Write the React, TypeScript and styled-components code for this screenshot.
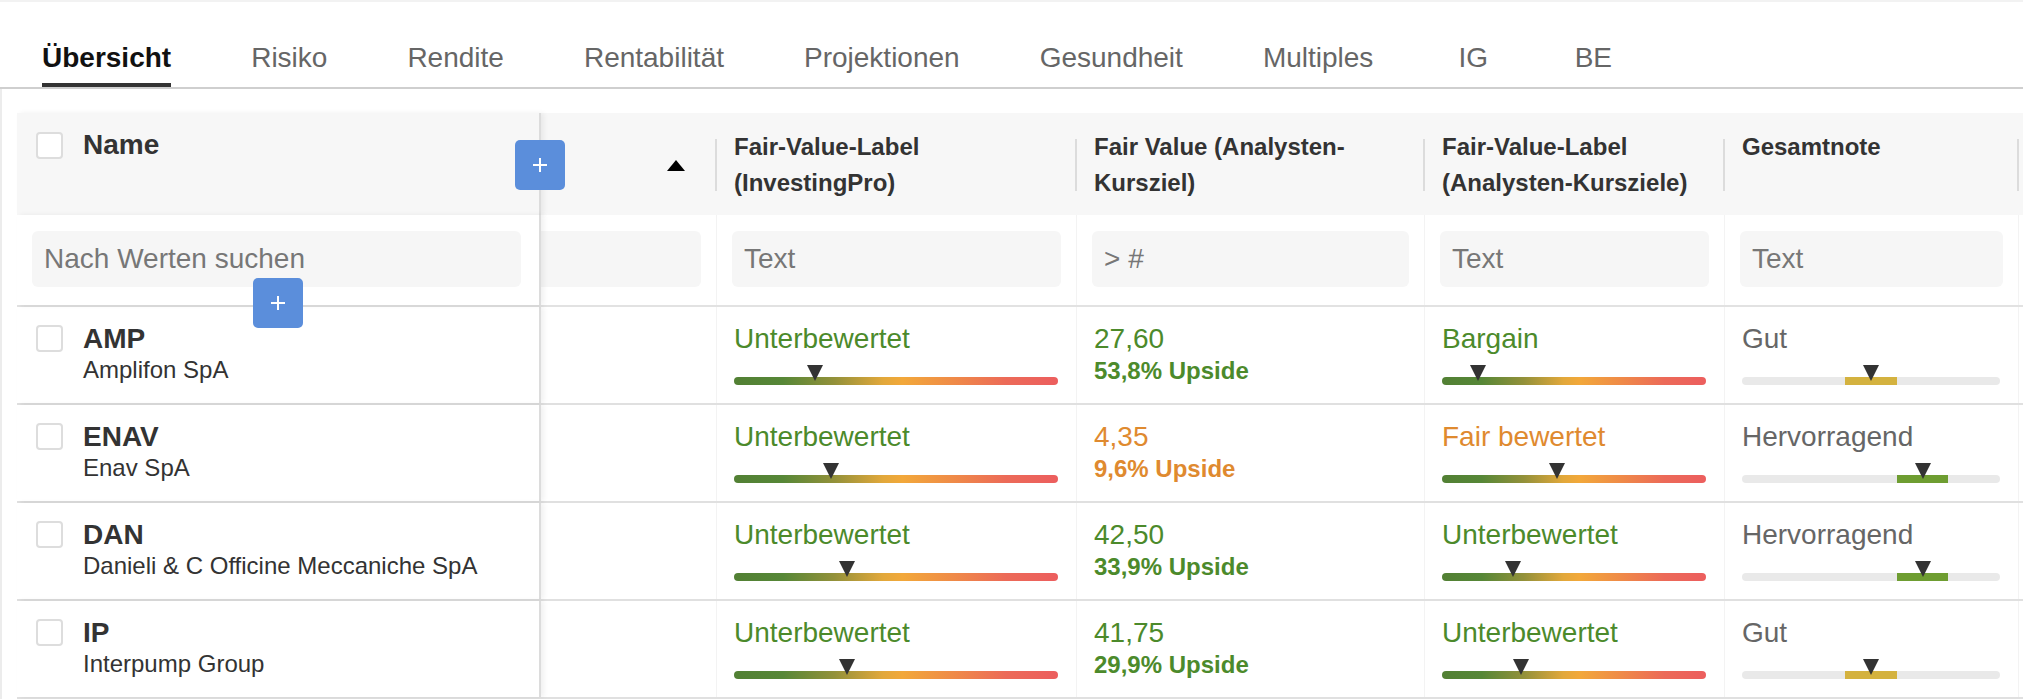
import React from 'react';
import styled, { createGlobalStyle, css } from 'styled-components';

const GlobalStyle = createGlobalStyle`
  html, body {
    margin: 0;
    padding: 0;
    background: #ffffff;
    font-family: "Liberation Sans", Arial, Helvetica, sans-serif;
    color: #333;
  }
  * {
    box-sizing: border-box;
  }
`;

const tones = {
  green: '#4c8a2b',
  orange: '#df8a2f',
  gray: '#666666',
};

type Tone = keyof typeof tones;

const Page = styled.div`
  width: 2023px;
  height: 699px;
  overflow: hidden;
  border-top: 2px solid #f2f2f2;
`;

const TabBar = styled.nav`
  display: flex;
  gap: 80px;
  padding: 38px 0 0 42px;
  border-bottom: 2px solid #cfcfcf;
`;

const Tab = styled.div<{ $active?: boolean }>`
  min-width: 40px;
  text-align: center;
  font-size: 28px;
  line-height: 36px;
  padding-bottom: 7px;
  white-space: nowrap;
  color: ${p => (p.$active ? '#111' : '#666')};
  font-weight: ${p => (p.$active ? 700 : 400)};
  border-bottom: 4px solid ${p => (p.$active ? '#333' : 'transparent')};
`;

const TableWrap = styled.div`
  padding: 24px 0 0 15px;
  border-left: 2px solid #ececec;
  overflow: hidden;
`;

const columns = css`
  display: grid;
  grid-template-columns: 524px 176px 360px 348px 300px 294px 200px;
`;

const HeaderRow = styled.div`
  ${columns};
  height: 102px;
  background: #f7f7f7;
`;

const FilterRow = styled.div`
  ${columns};
  height: 92px;
  border-bottom: 2px solid #e2e2e2;
`;

const BodyRow = styled.div`
  ${columns};
  height: 98px;
  border-bottom: 2px solid #e0e0e0;
`;

const FrozenCell = styled.div<{ $head?: boolean }>`
  position: relative;
  z-index: 2;
  display: flex;
  align-items: flex-start;
  gap: 20px;
  padding: ${p => (p.$head ? '16px' : '14px')} 19px 0;
  background: ${p => (p.$head ? '#f7f7f7' : '#ffffff')};
  border-right: 2px solid #dcdcdc;
  box-shadow: 3px 0 5px rgba(0, 0, 0, 0.06);
`;

const Checkbox = styled.span<{ $offset: number }>`
  flex: none;
  width: 27px;
  height: 27px;
  margin-top: ${p => p.$offset}px;
  border: 2px solid #dddddd;
  border-radius: 4px;
  background: #ffffff;
`;

const NameTitle = styled.div`
  font-size: 28px;
  line-height: 32px;
  font-weight: 700;
  color: #333;
`;

const HeadCell = styled.div<{ $divider?: boolean }>`
  position: relative;
  padding: 16px 17px 0;
  font-size: 24px;
  line-height: 36px;
  font-weight: 700;
  color: #333;

  ${p =>
    p.$divider &&
    css`
      &::after {
        content: '';
        position: absolute;
        right: 0;
        top: 26px;
        width: 2px;
        height: 52px;
        background: #dcdcdc;
      }
    `}
`;

const SortCell = styled(HeadCell)`
  display: flex;
  align-items: center;
  justify-content: flex-end;
  padding: 0 32px 0 0;
`;

const SortArrow = styled.span`
  width: 0;
  height: 0;
  margin-top: 3px;
  border-left: 9px solid transparent;
  border-right: 9px solid transparent;
  border-bottom: 11px solid #000;
`;

const FilterCell = styled.div<{ $flush?: boolean }>`
  padding: 16px 15px 0 ${p => (p.$flush ? '0' : '15px')};
  border-right: 1px solid #f3f3f3;
`;

const FrozenFilterCell = styled(FilterCell)`
  position: relative;
  z-index: 3;
  background: #ffffff;
  padding-right: 18px;
  border-right: 2px solid #dcdcdc;
  box-shadow: 3px 0 5px rgba(0, 0, 0, 0.06);
`;

const SearchInput = styled.input<{ $flush?: boolean }>`
  display: block;
  width: 100%;
  height: 56px;
  padding: 0 12px;
  border: none;
  outline: none;
  border-radius: ${p => (p.$flush ? '0 6px 6px 0' : '6px')};
  background: #f6f6f6;
  font-family: inherit;
  font-size: 28px;
  color: #333;

  &::placeholder {
    color: #777777;
  }
`;

const DataCell = styled.div`
  padding: 14px 18px 0 17px;
  border-right: 1px solid #f3f3f3;
`;

const Ticker = styled.div`
  font-size: 28px;
  line-height: 36px;
  font-weight: 700;
  color: #333;
`;

const Company = styled.div`
  font-size: 24px;
  line-height: 26px;
  color: #333;
  white-space: nowrap;
`;

const ValueText = styled.div<{ $tone: Tone }>`
  font-size: 28px;
  line-height: 36px;
  color: ${p => tones[p.$tone]};
  white-space: nowrap;
`;

const Upside = styled.div<{ $tone: Tone }>`
  font-size: 24px;
  line-height: 28px;
  font-weight: 700;
  color: ${p => tones[p.$tone]};
`;

const Gauge = styled.div`
  position: relative;
  height: 8px;
  margin-top: 20px;
`;

const GradientBar = styled.div`
  height: 8px;
  border-radius: 4px;
  background: linear-gradient(
    to right,
    #528034 0%,
    #568737 15%,
    #93913a 31%,
    #e2a83b 46%,
    #f2a83a 52%,
    #ef8a48 68%,
    #ec6a58 84%,
    #ec5e5e 100%
  );
`;

const Track = styled.div`
  position: relative;
  height: 8px;
  border-radius: 4px;
  background: #e9e9e9;
`;

const Segment = styled.div<{ $color: string }>`
  position: absolute;
  top: 0;
  width: 20%;
  height: 8px;
  background: ${p => p.$color};
`;

const Marker = styled.span`
  position: absolute;
  top: -12px;
  width: 0;
  height: 0;
  transform: translateX(-50%);
  border-left: 8px solid transparent;
  border-right: 8px solid transparent;
  border-top: 16px solid #333;
`;

const AddButton = styled.button<{ $spot: 'head' | 'filter' }>`
  position: absolute;
  z-index: 5;
  width: 50px;
  height: 50px;
  padding: 0;
  border: none;
  border-radius: 5px;
  background: #5b8edb;
  display: flex;
  align-items: center;
  justify-content: center;
  cursor: pointer;
  ${p =>
    p.$spot === 'head'
      ? css`
          top: 27px;
          right: -26px;
        `
      : css`
          top: 63px;
          left: 236px;
        `}
`;

const PlusIcon = () => (
  <svg width="14" height="14" viewBox="0 0 14 14">
    <path d="M7 0v14M0 7h14" stroke="#ffffff" strokeWidth="2" />
  </svg>
);

const FairGauge: React.FC<{ pos: number }> = ({ pos }) => (
  <Gauge>
    <GradientBar />
    <Marker style={{ left: `${pos}%` }} />
  </Gauge>
);

const gradeColors = ['#d25b4b', '#e49a3a', '#d4b23f', '#6e9d31', '#4c8a2b'];

const GradeGauge: React.FC<{ idx: number }> = ({ idx }) => (
  <Gauge>
    <Track>
      <Segment $color={gradeColors[idx]} style={{ left: `${idx * 20}%` }} />
    </Track>
    <Marker style={{ left: `${idx * 20 + 10}%` }} />
  </Gauge>
);

const tabs = ['Übersicht', 'Risiko', 'Rendite', 'Rentabilität', 'Projektionen', 'Gesundheit', 'Multiples', 'IG', 'BE'];

interface Stock {
  ticker: string;
  name: string;
  proPos: number;
  price: string;
  upside: string;
  priceTone: Tone;
  analystLabel: string;
  analystTone: Tone;
  analystPos: number;
  grade: string;
  gradeIdx: number;
}

const stocks: Stock[] = [
  { ticker: 'AMP', name: 'Amplifon SpA', proPos: 25, price: '27,60', upside: '53,8% Upside', priceTone: 'green', analystLabel: 'Bargain', analystTone: 'green', analystPos: 13.6, grade: 'Gut', gradeIdx: 2 },
  { ticker: 'ENAV', name: 'Enav SpA', proPos: 30, price: '4,35', upside: '9,6% Upside', priceTone: 'orange', analystLabel: 'Fair bewertet', analystTone: 'orange', analystPos: 43.5, grade: 'Hervorragend', gradeIdx: 3 },
  { ticker: 'DAN', name: 'Danieli & C Officine Meccaniche SpA', proPos: 35, price: '42,50', upside: '33,9% Upside', priceTone: 'green', analystLabel: 'Unterbewertet', analystTone: 'green', analystPos: 27, grade: 'Hervorragend', gradeIdx: 3 },
  { ticker: 'IP', name: 'Interpump Group', proPos: 35, price: '41,75', upside: '29,9% Upside', priceTone: 'green', analystLabel: 'Unterbewertet', analystTone: 'green', analystPos: 30, grade: 'Gut', gradeIdx: 2 },
];

export default function App() {
  return (
    <>
      <GlobalStyle />
      <Page>
        <TabBar>
          {tabs.map((t, i) => (
            <Tab key={t} $active={i === 0}>
              {t}
            </Tab>
          ))}
        </TabBar>

        <TableWrap>
          <HeaderRow>
            <FrozenCell $head>
              <Checkbox $offset={3} />
              <NameTitle>Name</NameTitle>
              <AddButton $spot="head" aria-label="Spalte hinzufügen">
                <PlusIcon />
              </AddButton>
            </FrozenCell>
            <SortCell $divider>
              <SortArrow />
            </SortCell>
            <HeadCell $divider>
              Fair-Value-Label
              <br />
              (InvestingPro)
            </HeadCell>
            <HeadCell $divider>
              Fair Value (Analysten-
              <br />
              Kursziel)
            </HeadCell>
            <HeadCell $divider>
              Fair-Value-Label
              <br />
              (Analysten-Kursziele)
            </HeadCell>
            <HeadCell $divider>Gesamtnote</HeadCell>
            <HeadCell />
          </HeaderRow>

          <FilterRow>
            <FrozenFilterCell>
              <SearchInput placeholder="Nach Werten suchen" />
              <AddButton $spot="filter" aria-label="Zeile hinzufügen">
                <PlusIcon />
              </AddButton>
            </FrozenFilterCell>
            <FilterCell $flush>
              <SearchInput $flush />
            </FilterCell>
            <FilterCell>
              <SearchInput placeholder="Text" />
            </FilterCell>
            <FilterCell>
              <SearchInput placeholder="> #" />
            </FilterCell>
            <FilterCell>
              <SearchInput placeholder="Text" />
            </FilterCell>
            <FilterCell>
              <SearchInput placeholder="Text" />
            </FilterCell>
            <FilterCell />
          </FilterRow>

          {stocks.map(s => (
            <BodyRow key={s.ticker}>
              <FrozenCell>
                <Checkbox $offset={4} />
                <div>
                  <Ticker>{s.ticker}</Ticker>
                  <Company>{s.name}</Company>
                </div>
              </FrozenCell>
              <DataCell />
              <DataCell>
                <ValueText $tone="green">Unterbewertet</ValueText>
                <FairGauge pos={s.proPos} />
              </DataCell>
              <DataCell>
                <ValueText $tone={s.priceTone}>{s.price}</ValueText>
                <Upside $tone={s.priceTone}>{s.upside}</Upside>
              </DataCell>
              <DataCell>
                <ValueText $tone={s.analystTone}>{s.analystLabel}</ValueText>
                <FairGauge pos={s.analystPos} />
              </DataCell>
              <DataCell>
                <ValueText $tone="gray">{s.grade}</ValueText>
                <GradeGauge idx={s.gradeIdx} />
              </DataCell>
              <DataCell />
            </BodyRow>
          ))}
        </TableWrap>
      </Page>
    </>
  );
}
